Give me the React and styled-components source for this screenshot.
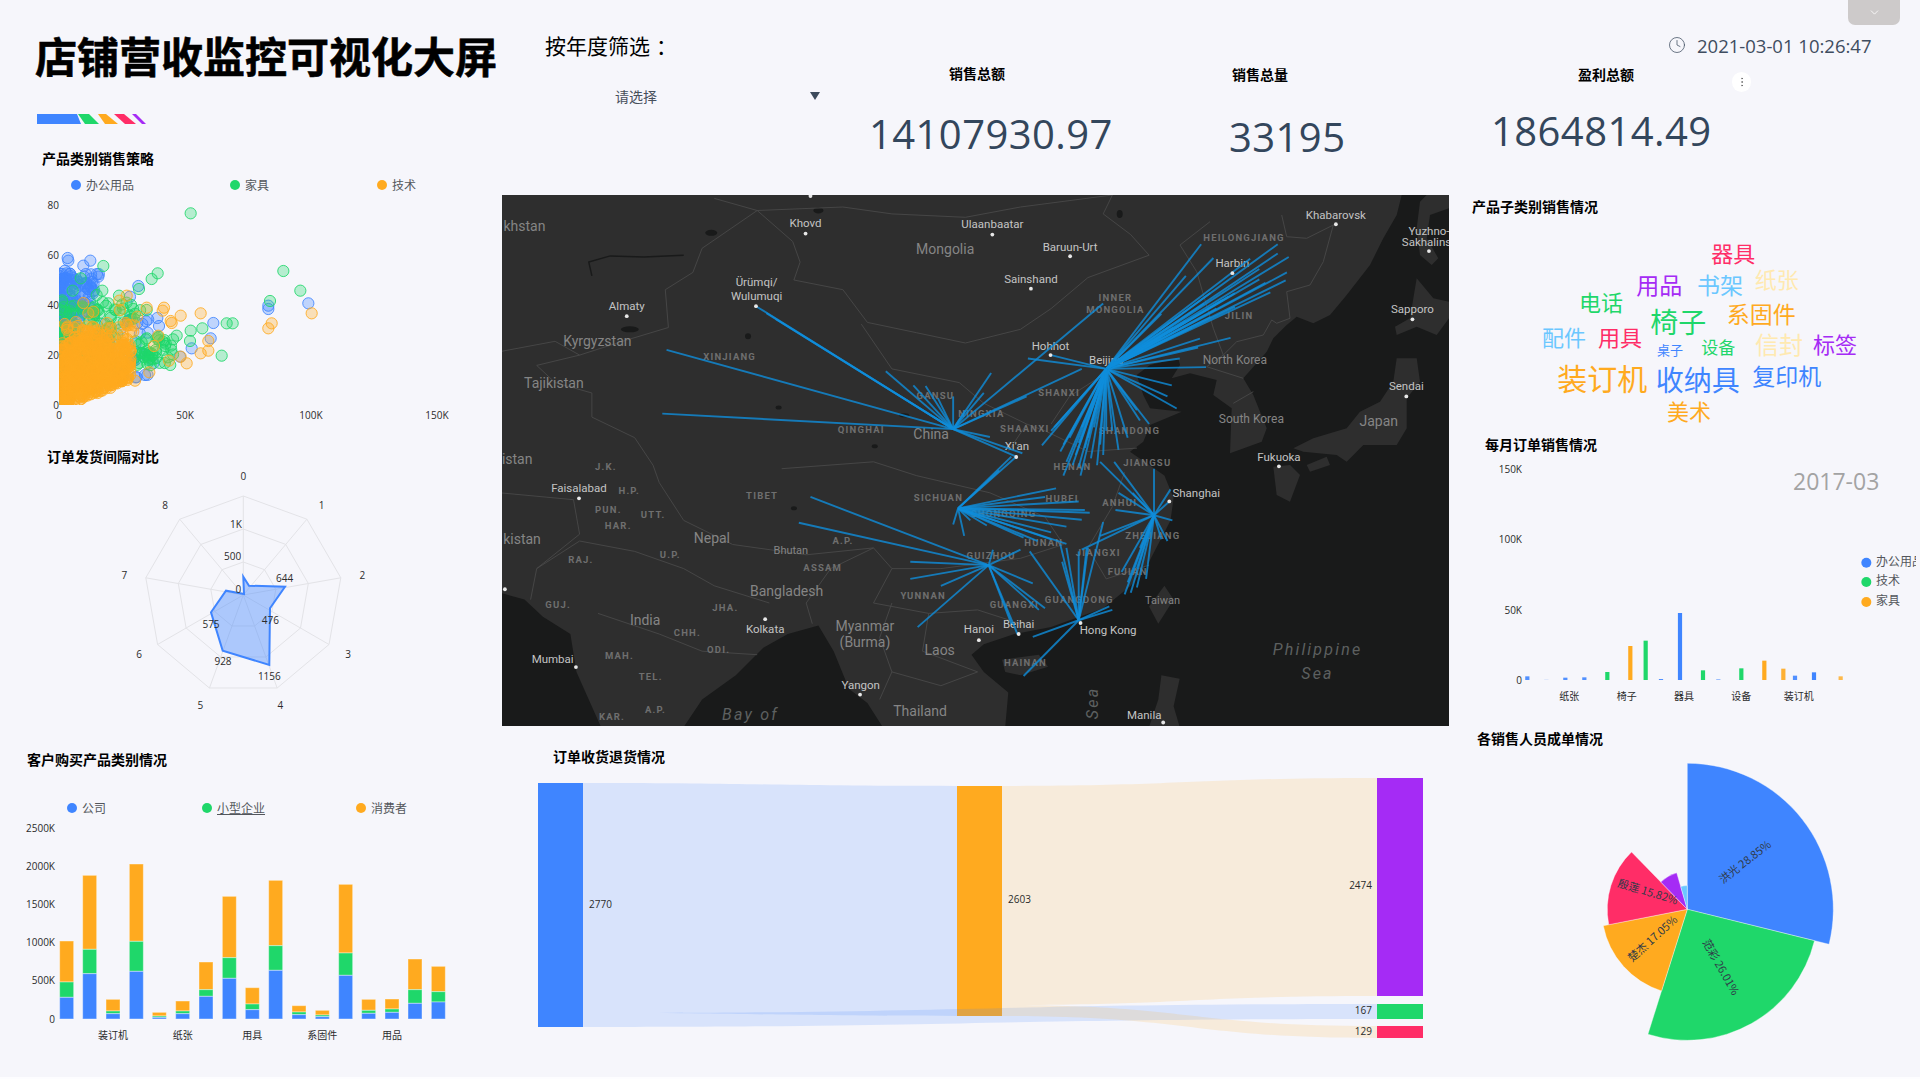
import React from 'react';
import styled, { createGlobalStyle } from 'styled-components';
import { ChevronDown, Clock, EllipsisVertical } from 'lucide-react';

const BLUE = '#3f85ff';
const GREEN = '#1fd76a';
const ORANGE = '#ffaa1f';
const RED = '#ff2d67';
const PURPLE = '#a52bf5';
const SKY = '#6bc7ff';
const CREAM = '#ffe9b0';
const CJK = '"Noto Sans CJK SC", "Noto Sans", sans-serif';
const NUM = '"Open Sans", "Noto Sans CJK SC", sans-serif';

const GlobalStyle = createGlobalStyle`
  html, body { margin: 0; padding: 0; background: #f6f6fb; overflow: hidden; }
  body { font-family: ${CJK}; }
`;

const Page = styled.div`
  position: relative;
  display: flex;
  width: 1920px;
  height: 1079px;
  overflow: hidden;
  background: #f6f6fb;
  box-sizing: border-box;
  border-bottom: 2px solid #fdfdff;
`;
const LeftCol = styled.div`
  width: 502px;
  flex: none;
`;
const Main = styled.div`
  width: 1418px;
  flex: none;
`;
const Head = styled.div`
  height: 149px;
  padding-left: 35px;
  box-sizing: border-box;
`;
const Title = styled.h1`
  margin: 0;
  padding-top: 25px;
  font-size: 42px;
  line-height: 60px;
  font-weight: 700;
  -webkit-text-stroke: 0.6px #000;
  color: #000;
  white-space: nowrap;
`;
const Stripe = styled.svg`
  display: block;
  margin: 29px 0 0 2px;
`;
const Panel = styled.section`
  height: ${p => p.$h}px;
  overflow: hidden;
`;
const PanelTitle = styled.h3`
  margin: 0;
  padding: ${p => p.$top || 0}px 0 2px ${p => p.$x}px;
  font-size: 14px;
  line-height: 18px;
  font-weight: 700;
  color: #000;
`;
const Legend = styled.div`
  display: flex;
  margin-top: ${p => p.$top}px;
  padding: 0 0 2px ${p => p.$x}px;
  height: 15px;
  align-items: center;
`;
const LegendItem = styled.div`
  display: flex;
  align-items: center;
  width: ${p => p.$w}px;
  font-size: 12px;
  color: #53565c;
  span { text-decoration: ${p => (p.$under ? 'underline' : 'none')}; }
`;
const Dot = styled.i`
  width: 10px;
  height: 10px;
  margin-right: 5px;
  border-radius: 50%;
  background: ${p => p.$c};
`;
const Plot = styled.svg`
  display: block;
  margin-top: ${p => p.$mt || 0}px;
`;
const AxisText = styled.text.attrs({ dy: 1 })`
  font-family: ${p => (p.$cjk ? CJK : NUM)};
  font-size: 10px;
  fill: #2b2b2b;
  text-anchor: ${p => p.$a || 'middle'};
  dominant-baseline: middle;
`;
const TopBar = styled.div`
  display: flex;
  height: 195px;
`;
const Filter = styled.div`
  width: 367px;
  flex: none;
  padding: 31px 0 0 43px;
  box-sizing: border-box;
`;
const FilterLabel = styled.div`
  font-size: 21px;
  line-height: 28px;
  color: #000;
`;
const Colon = styled.span`
  padding-left: 6px;
`;
const Select = styled.div`
  display: flex;
  justify-content: space-between;
  align-items: center;
  width: 280px;
  height: 20px;
  margin-top: 27px;
  padding: 0 5px 0 70px;
  box-sizing: border-box;
  font-size: 14px;
  color: #47505c;
`;
const Caret = styled.i`
  width: 0;
  height: 0;
  border-left: 5px solid transparent;
  border-right: 5px solid transparent;
  border-top: 8px solid #3c4a5c;
`;
const Kpi = styled.div`
  width: ${p => p.$w}px;
  flex: none;
  padding-top: ${p => p.$top}px;
  box-sizing: border-box;
`;
const KpiLabel = styled.div`
  margin: 0 0 ${p => p.$gap}px ${p => p.$x}px;
  font-size: 14px;
  line-height: 20px;
  font-weight: 700;
  color: #000;
`;
const KpiValue = styled.div`
  font-family: ${NUM};
  font-size: 40px;
  line-height: 56px;
  letter-spacing: 0.42px;
  color: #33465c;
  white-space: nowrap;
`;
const ClockBox = styled.div`
  display: flex;
  align-items: center;
  height: 22px;
  margin-top: 34px;
  gap: 11px;
  font-family: ${NUM};
  font-size: 18.5px;
  color: #3f4d60;
  white-space: nowrap;
`;
const MenuDots = styled.div`
  position: absolute;
  left: 1732px;
  top: 72px;
  display: flex;
  align-items: center;
  justify-content: center;
  width: 19px;
  height: 20px;
  border-radius: 10px;
  background: #fff;
  color: #666;
`;
const Handle = styled.div`
  position: absolute;
  left: 1848px;
  top: 0;
  display: flex;
  align-items: center;
  justify-content: center;
  width: 52px;
  height: 25px;
  border-radius: 0 0 7px 7px;
  background: #cdcaca;
  color: #fff;
`;
const Body = styled.div`
  display: flex;
`;
const CenterCol = styled.div`
  width: 947px;
  flex: none;
`;
const RightCol = styled.div`
  width: 471px;
  flex: none;
`;
const MapFrame = styled.svg`
  display: block;
  background: #191a1a;
`;
const CityLabel = styled.text`
  font-family: Roboto, "Open Sans", sans-serif;
  font-size: 11.5px;
  fill: #c4c4c4;
  text-anchor: middle;
  dominant-baseline: middle;
`;
const CountryLabel = styled.text`
  font-family: Roboto, "Open Sans", sans-serif;
  font-size: ${p => p.$s || 14}px;
  fill: #858585;
  text-anchor: middle;
  dominant-baseline: middle;
`;
const ProvinceLabel = styled.text`
  font-family: Roboto, "Open Sans", sans-serif;
  font-size: 9.5px;
  font-weight: 700;
  letter-spacing: 1.2px;
  fill: #6f6f6f;
  text-anchor: middle;
  dominant-baseline: middle;
`;
const SeaLabel = styled.text`
  font-family: Roboto, "Open Sans", sans-serif;
  font-size: 16px;
  font-style: italic;
  letter-spacing: 2.2px;
  fill: #5d6060;
  text-anchor: middle;
  dominant-baseline: middle;
`;
const Word = styled.text`
  font-family: ${CJK};
  font-size: ${p => p.$s}px;
  fill: ${p => p.$c};
  text-anchor: middle;
  dominant-baseline: central;
`;
const LegendText = styled.text`
  font-family: ${CJK};
  font-size: 12px;
  fill: #53565c;
  dominant-baseline: middle;
`;
const TimelineText = styled.text`
  font-family: ${NUM};
  font-size: 23px;
  fill: #a3a3a3;
  dominant-baseline: middle;
`;
const SliceLabel = styled.text`
  font-family: ${CJK};
  font-size: 11px;
  fill: #2f3a48;
  text-anchor: middle;
  dominant-baseline: middle;
`;

// seeded random so the scatter is the same on every load
let seed = 20210301;
const rnd = () => {
  seed = (seed + 0x6d2b79f5) | 0;
  let t = Math.imul(seed ^ (seed >>> 15), 1 | seed);
  t = (t + Math.imul(t ^ (t >>> 7), 61 | t)) ^ t;
  return ((t ^ (t >>> 14)) >>> 0) / 4294967296;
};

const bluePts = [[143, 354], [145, 362], [190, 377], [211, 362], [192, 430], [355, 438], [330, 470], [745, 497], [745, 507], [865, 490], [580, 549], [352, 549], [412, 534], [417, 558], [383, 578], [572, 595], [515, 625], [480, 650], [400, 670], [375, 705], [140, 400], [135, 392]];
const greenPts = [[512, 220], [250, 378], [182, 415], [395, 417], [413, 400], [158, 452], [247, 452], [790, 393], [841, 452], [750, 483], [357, 447], [297, 467], [620, 550], [638, 550], [512, 572], [547, 565], [605, 647], [470, 587], [510, 603], [380, 510], [265, 490], [230, 465]];
const orangePts = [[190, 489], [320, 467], [298, 482], [380, 503], [432, 503], [428, 512], [452, 543], [455, 549], [482, 527], [542, 520], [875, 520], [755, 550], [745, 565], [565, 603], [565, 632], [542, 640], [500, 670], [447, 662], [482, 650], [415, 587], [402, 618], [388, 697], [345, 722], [340, 575], [352, 530], [300, 510], [220, 515], [205, 520]];

for (let i = 0; i < 300; i++) {
  const y = 800 - Math.pow(rnd(), 0.75) * 400;
  bluePts.push([118 + Math.pow(rnd(), 2.2) * (800 - y) * 0.3, y]);
}
for (let i = 0; i < 45; i++) bluePts.push([200 + rnd() * 200, 520 + rnd() * 200]);
for (let i = 0; i < 260; i++) {
  const y = 800 - Math.pow(rnd(), 1.15) * 320;
  greenPts.push([118 + Math.pow(rnd(), 1.25) * (800 - y) * 0.85, y]);
}
for (let i = 0; i < 45; i++) greenPts.push([340 + rnd() * 120, 590 + rnd() * 90]);
for (let i = 0; i < 520; i++) {
  const x = 118 + Math.pow(rnd(), 1.3) * 215;
  const top = 600 - Math.sin(((x - 118) / 215) * 3.1) * 30;
  const bottom = 808 - (x - 118) * 0.42;
  orangePts.push([x, top + Math.pow(rnd(), 0.8) * (bottom - top)]);
}
for (let i = 0; i < 40; i++) orangePts.push([130 + rnd() * 215, 545 + rnd() * 70]);

const stacks = [
  [772, 726, 603], [701, 628, 406], [821, 813, 778], [694, 604, 372], [832, 828, 817], [821, 813, 783],
  [769, 749, 666], [715, 653, 469], [809, 792, 743], [691, 617, 421], [824, 816, 797], [830, 825, 811],
  [706, 639, 433], [820, 811, 778], [817, 807, 777], [790, 749, 657], [786, 755, 679],
];
const stackX = [140, 209, 279, 349, 418, 488, 558, 628, 697, 767, 837, 907, 977, 1046, 1116, 1185, 1255];

const monthBars = [
  [202, 739, BLUE, 0.9], [259, 747, BLUE, 0.12], [316, 743, BLUE, 0.9], [373, 742, BLUE, 0.9], [442, 726, GREEN, 1],
  [511, 648, ORANGE, 1], [557, 632, GREEN, 1], [603, 747, BLUE, 0.9], [660, 549, BLUE, 1], [729, 721, GREEN, 1],
  [775, 747, BLUE, 0.5], [844, 715, GREEN, 1], [913, 692, ORANGE, 1], [970, 716, ORANGE, 0.9], [1005, 737, BLUE, 0.9],
  [1062, 727, BLUE, 1], [1142, 739, ORANGE, 0.8],
];

const words = [
  ['器具', 820, 192, 22, RED], ['用品', 598, 288, 23, PURPLE], ['书架', 780, 287, 23, SKY], ['纸张', 950, 270, 22, CREAM],
  ['电话', 423, 340, 22, GREEN], ['椅子', 655, 398, 28, GREEN], ['系固件', 904, 375, 23, ORANGE], ['配件', 312, 445, 22, SKY],
  ['用具', 480, 445, 22, RED], ['桌子', 630, 483, 13, BLUE], ['设备', 775, 475, 17, GREEN], ['信封', 957, 466, 24, CREAM],
  ['标签', 1125, 466, 22, PURPLE], ['装订机', 427, 568, 30, ORANGE], ['收纳具', 713, 573, 28, BLUE], ['复印机', 980, 562, 23, BLUE],
  ['美术', 687, 665, 22, ORANGE],
];

// z(): coordinates read off the whole-map crop, q(): off the north-east crop
const z = ([x, y]) => [x / 1.633 - 2, y / 2.904 - 5.2];
const q = ([x, y]) => [628 + x / 3, y / 3];
const toPts = list => list.map(p => p.map(n => n.toFixed(1)).join(',')).join(' ');

const seaEast = toPts([
  ...[[815, 0], [800, 60], [760, 130], [720, 210], [650, 300], [600, 360], [550, 385], [500, 365], [470, 390], [430, 430], [410, 470], [340, 550], [370, 600], [410, 700], [395, 740], [300, 775], [305, 640], [250, 600], [260, 555], [180, 535], [125, 550], [150, 510], [145, 490], [60, 510], [20, 540], [40, 600], [60, 640], [155, 650], [60, 690], [40, 740], [0, 770]].map(q),
  ...[[1085, 830], [1100, 895], [1095, 960], [1060, 1080], [1030, 1150], [985, 1215], [900, 1270], [840, 1290], [790, 1320], [770, 1350], [790, 1400], [830, 1460], [825, 1560]].map(z),
  [947, 531], [947, 0],
]);
const seaArabian = toPts([[0, 1170], [40, 1190], [70, 1240], [115, 1290], [125, 1400], [165, 1560], [0, 1560]].map(z));
const seaBengal = toPts([[300, 1560], [330, 1480], [385, 1410], [430, 1330], [470, 1290], [520, 1265], [545, 1340], [570, 1450], [600, 1490], [625, 1560]].map(z));
const islands = [
  [[870, 20], [890, 0], [957, 0], [957, 40], [900, 60], [890, 130], [925, 190], [905, 210], [870, 180], [860, 100]].map(q),
  [[860, 250], [910, 310], [957, 320], [957, 370], [920, 420], [860, 395], [800, 420], [795, 395], [840, 370]].map(q),
  [[800, 490], [860, 490], [870, 560], [830, 610], [830, 700], [800, 750], [700, 750], [650, 800], [620, 780], [520, 770], [490, 760], [550, 730], [650, 700], [690, 650], [750, 620], [790, 560]].map(q),
  [[430, 815], [480, 810], [510, 840], [480, 920], [440, 900]].map(q),
  [[530, 810], [590, 785], [600, 810], [540, 830]].map(q),
  [[1085, 1150], [1100, 1190], [1075, 1260], [1060, 1210]].map(z),
  [[820, 1365], [880, 1350], [895, 1385], [850, 1410], [825, 1400]].map(z),
  [[1080, 1410], [1110, 1420], [1100, 1500], [1110, 1560], [1060, 1560], [1075, 1480]].map(z),
];
const borders = [
  [[420, 60], [478, 150], [490, 210], [480, 262], [560, 290], [600, 385], [680, 415], [760, 445], [850, 405], [900, 345], [960, 255], [1060, 190], [1030, 130], [985, 70], [1000, 15]],
  [[1000, 15], [850, 50], [760, 80], [640, 70], [560, 50], [420, 60], [350, 25]],
  [[420, 60], [330, 170], [315, 240], [270, 290], [275, 400], [200, 440], [130, 480], [90, 440], [0, 470]],
  [[130, 480], [60, 510], [90, 560], [150, 590], [150, 660], [220, 720], [250, 800], [260, 850], [300, 960], [380, 1030], [500, 1060], [610, 1040], [640, 1100], [610, 1200], [700, 1230], [780, 1220], [850, 1260]],
  [[590, 390], [640, 520], [750, 560], [790, 620], [860, 680], [830, 760]],
  [[460, 810], [610, 790], [680, 830], [800, 880], [890, 950], [920, 1030], [850, 1070], [720, 1100], [640, 1100]],
  [[860, 680], [890, 700], [960, 760], [1040, 750]],
  [[1000, 520], [930, 600], [900, 680]],
  [[1020, 820], [1000, 920], [960, 1040], [990, 1130], [1060, 1090]],
  [[60, 1100], [130, 1020], [220, 1050], [300, 1100], [350, 1150], [440, 1200]],
  [[0, 880], [120, 900], [130, 1000], [60, 1100], [50, 1190]],
  [[160, 1230], [260, 1290], [330, 1340], [420, 1350]],
  [[610, 1040], [540, 1100], [500, 1200], [510, 1260]],
  [[640, 1200], [620, 1300], [640, 1400], [620, 1480]],
  [[700, 1230], [690, 1340], [780, 1400], [720, 1440], [640, 1400]],
].map(b => b.map(z));
const bordersNE = [
  [[240, 80], [150, 150], [200, 230], [250, 400], [280, 480], [230, 515]],
  [[470, 125], [530, 130], [610, 90], [580, 200], [540, 270], [470, 290], [480, 370], [440, 385], [425, 375], [400, 420], [320, 440], [280, 480]],
  [[455, 60], [470, 125]],
  [[230, 515], [340, 550]],
  [[310, 625], [370, 590]],
].map(b => b.map(q));

const hubs = [
  [[990, 520], [[1145, 158], [1165, 198], [1120, 250], [1270, 158], [1270, 185], [1288, 195], [1285, 240], [1283, 263], [1258, 298], [1200, 340], [1180, 320], [1240, 230], [1225, 200], [1150, 330], [1193, 430], [1143, 432], [1140, 458], [1110, 490], [1153, 515], [1097, 568], [1105, 635], [1090, 600], [862, 490], [900, 480], [885, 742], [905, 690], [915, 760], [920, 830], [935, 800], [948, 830], [965, 780], [945, 805], [1010, 755], [1000, 700], [1045, 670], [1060, 680], [1040, 640], [975, 800], [955, 750], [990, 700], [985, 770], [930, 720], [950, 690], [1025, 720], [1240, 260], [1200, 300], [1160, 370], [1130, 400], [1080, 430], [1100, 400], [1190, 310], [1160, 300], [1250, 270], [1120, 380], [1170, 345], [1080, 360], [940, 770], [925, 790], [960, 720], [970, 690], [920, 740], [900, 700], [945, 735], [980, 740]]],
  [[740, 695], [[418, 338], [435, 358], [450, 375], [272, 465], [265, 650], [630, 527], [675, 568], [695, 570], [715, 605], [740, 600], [802, 532], [790, 590], [760, 640], [985, 330], [860, 600], [950, 520], [800, 718], [853, 765], [843, 775]]],
  [[748, 925], [[843, 775], [835, 775], [815, 815], [908, 867], [945, 905], [955, 930], [963, 938], [950, 958], [925, 978], [900, 995], [925, 1028], [878, 1020], [740, 972], [758, 1005], [768, 960], [795, 975], [890, 892], [900, 1015], [855, 1010]]],
  [[798, 1090], [[507, 892], [488, 967], [670, 1080], [670, 1130], [720, 1150], [682, 1270], [850, 1045], [805, 1045], [870, 1143], [890, 1215], [880, 1220], [845, 1290], [835, 1260]]],
  [[945, 1250], [[865, 1050], [915, 1030], [925, 1040], [945, 1050], [960, 1040], [985, 965], [870, 1298], [855, 1412], [995, 1210], [1000, 1220], [958, 1040], [918, 1080]]],
  [[1068, 945], [[980, 790], [1003, 790], [1010, 880], [1068, 810], [1033, 880], [1005, 930], [1095, 870], [1093, 905], [1098, 960], [950, 1045], [980, 1005], [1020, 1175], [1030, 1170], [1040, 1155], [1055, 1130], [1015, 1110], [1090, 1020], [1080, 1015], [1045, 1040], [1040, 1100], [1025, 1140]]],
];

const cities = [
  ['Khovd', 499, 100, 499, 127], ['Ulaanbaatar', 804, 102, 804, 130], ['Baruun-Urt', 931, 170, 931, 193], ['Khabarovsk', 1365, 75, 1365, 100],
  ['Yuzhno-', 1517, 123, 1517, 178], ['Sakhalins', 1513, 155], ['Sainshand', 867, 262, 867, 287], ['Harbin', 1196, 214, 1196, 242],
  ['Ürümqi/', 419, 272, 418, 338], ['Wulumuqi', 419, 312], ['Almaty', 207, 340, 207, 367], ['Hohhot', 899, 455, 899, 480],
  ['Beijing', 990, 496], ['Sapporo', 1490, 350, 1490, 376], ['Sendai', 1480, 574, 1480, 600], ['Fukuoka', 1272, 778, 1272, 803],
  ["Xi'an", 844, 748, 843, 776], ['Shanghai', 1137, 884, 1093, 905], ['Faisalabad', 129, 868, 129, 896], ['Kolkata', 433, 1277, 433, 1247],
  ['Mumbai', 86, 1365, 124, 1386], ['Hanoi', 782, 1278, 782, 1308], ['Beihai', 847, 1263, 847, 1290], ['Hong Kong', 993, 1280, 948, 1258],
  ['Yangon', 589, 1440, 588, 1466], ['Manila', 1052, 1527, 1083, 1547],
];
const countries = [
  ['Mongolia', 727, 177, 14], ['khstan', 40, 108, 14], ['Kyrgyzstan', 159, 443, 14], ['Tajikistan', 88, 565, 14], ['China', 704, 713, 14],
  ['istan', 28, 785, 14], ['kistan', 36, 1018, 14], ['Nepal', 346, 1015, 14], ['Bhutan', 475, 1050, 11], ['Bangladesh', 468, 1170, 14],
  ['India', 237, 1252, 14], ['Myanmar', 596, 1270, 14], ['(Burma)', 596, 1316, 14], ['Laos', 718, 1340, 14], ['Thailand', 686, 1517, 14],
  ['North Korea', 1200, 496, 12], ['South Korea', 1227, 668, 12], ['Japan', 1435, 675, 14], ['Taiwan', 1082, 1193, 11],
];
const provinces = [
  ['HEILONGJIANG', 1215, 140], ['INNER', 1005, 315], ['MONGOLIA', 1005, 350], ['JILIN', 1207, 367], ['XINJIANG', 375, 487], ['GANSU', 711, 600],
  ['NINGXIA', 786, 652], ['SHANXI', 913, 592], ['SHAANXI', 857, 697], ['SHANDONG', 1028, 702], ['QINGHAI', 590, 700], ['HENAN', 935, 807],
  ['JIANGSU', 1057, 795], ['TIBET', 428, 890], ['SICHUAN', 716, 895], ['HUBEI', 918, 898], ['ANHUI', 1012, 910], ['CHONGQING', 822, 944],
  ['ZHEJIANG', 1066, 1006], ['HUNAN', 888, 1027], ['A.P.', 560, 1021], ['GUIZHOU', 802, 1066], ['JIANGXI', 977, 1055], ['FUJIAN', 1025, 1110],
  ['ASSAM', 527, 1100], ['YUNNAN', 691, 1180], ['GUANGXI', 840, 1207], ['GUANGDONG', 946, 1192], ['HAINAN', 858, 1376], ['J.K.', 173, 806],
  ['H.P.', 211, 875], ['PUN.', 177, 930], ['UTT.', 250, 945], ['HAR.', 193, 977], ['RAJ.', 132, 1077], ['U.P.', 278, 1062], ['GUJ.', 95, 1208],
  ['JHA.', 368, 1217], ['CHH.', 306, 1288], ['MAH.', 195, 1355], ['ODI.', 357, 1337], ['TEL.', 246, 1415], ['KAR.', 183, 1532], ['A.P.', 254, 1512],
];
const lakes = [[345, 125, 6, 3], [212, 405, 9, 3], [405, 425, 3, 3], [455, 632, 3, 2], [520, 60, 5, 3], [1012, 70, 3, 4], [660, 655, 5, 2], [480, 925, 3, 2], [612, 745, 3, 2]];

const StoreMap = () => (
  <MapFrame width="947" height="531" viewBox="0 0 947 531">
    <rect width="947" height="531" fill="#2e2e2e" />
    <polygon points={seaEast} fill="#191a1a" />
    <polygon points={seaArabian} fill="#191a1a" />
    <polygon points={seaBengal} fill="#191a1a" />
    {islands.map((pts, i) => <polygon key={i} points={toPts(pts)} fill="#2e2e2e" />)}
    <polyline points={toPts([[150, 250], [145, 210], [180, 192], [235, 195], [300, 190]].map(z))} fill="none" stroke="#191a1a" strokeWidth="1.5" />
    {lakes.map(([x, y, rx, ry], i) => {
      const [cx, cy] = z([x, y]);
      return <ellipse key={i} cx={cx} cy={cy} rx={rx} ry={ry} fill="#191a1a" />;
    })}
    {[...borders, ...bordersNE].map((b, i) => (
      <polyline key={i} points={toPts(b)} fill="none" stroke="#484848" strokeWidth="0.9" />
    ))}
    {provinces.map(([t, x, y], i) => {
      const [px, py] = z([x, y]);
      return <ProvinceLabel key={i} x={px} y={py}>{t}</ProvinceLabel>;
    })}
    {countries.map(([t, x, y, s]) => {
      const [px, py] = z([x, y]);
      return <CountryLabel key={t} x={px} y={py} $s={s}>{t}</CountryLabel>;
    })}
    {cities.map(([t, x, y]) => {
      const [px, py] = z([x, y]);
      return <CityLabel key={t} x={px} y={py}>{t}</CityLabel>;
    })}
    {hubs.map(([hub, ends], i) => {
      const [hx, hy] = z(hub);
      return ends.map((e, j) => {
        const [ex, ey] = z(e);
        return <line key={`${i}-${j}`} x1={hx} y1={hy} x2={ex} y2={ey} stroke="#0f8ddb" strokeWidth="1.9" strokeOpacity="0.8" />;
      });
    })}
    {cities.filter(c => c[3] !== undefined).map(c => {
      const [dx, dy] = z([c[3], c[4]]);
      return <circle key={c[0]} cx={dx} cy={dy} r="1.9" fill="#e8e8e8" />;
    })}
    <circle cx={z([507, 18])[0]} cy={z([507, 18])[1]} r="1.9" fill="#e8e8e8" />
    <circle cx={z([8, 1160])[0]} cy={z([8, 1160])[1]} r="1.9" fill="#e8e8e8" />
    <SeaLabel x={z([1335, 1340])[0]} y={z([1335, 1340])[1]}>Philippine</SeaLabel>
    <SeaLabel x={z([1335, 1408])[0]} y={z([1335, 1408])[1]}>Sea</SeaLabel>
    <SeaLabel x={z([409, 1528])[0]} y={z([409, 1528])[1]}>Bay of</SeaLabel>
    <SeaLabel transform={`translate(${z([970, 1490])[0]} ${z([970, 1490])[1]}) rotate(-90)`}>Sea</SeaLabel>
  </MapFrame>
);

const ScatterChart = () => {
  const series = [[bluePts, BLUE], [greenPts, GREEN], [orangePts, ORANGE]];
  return (
    <Plot width="502" height="236" viewBox="0 194 502 236">
      <defs>
        <clipPath id="scatterClip"><rect x="59" y="194" width="443" height="211" /></clipPath>
      </defs>
      <g clipPath="url(#scatterClip)">
        {series.map(([pts, c]) =>
          pts.map(([x, y], i) => (
            <circle key={`${c}${i}`} cx={20 + x / 3} cy={140 + y / 3} r="5.6" fill={c} fillOpacity="0.3" stroke={c} strokeOpacity="0.85" />
          ))
        )}
      </g>
      {[0, 20, 40, 60, 80].map((v, i) => (
        <AxisText key={v} x="59" y={405 - i * 50} $a="end">{v}</AxisText>
      ))}
      {[['0', 59], ['50K', 185], ['100K', 311], ['150K', 437]].map(([t, x]) => (
        <AxisText key={t} x={x} y="415">{t}</AxisText>
      ))}
    </Plot>
  );
};

const RX = 243.3;
const RY = 595;
const ring = r =>
  Array.from({ length: 9 }, (_, i) => {
    const a = (i * 40 * Math.PI) / 180;
    return [RX + r * Math.sin(a), RY - r * Math.cos(a)];
  });

const RadarChart = () => {
  const zr = ([x, y]) => [100 + x / 3, 440 + y / 3];
  const shape = [[430, 410], [447, 437], [555, 440], [510, 505], [508, 675], [368, 632], [333, 517], [378, 452], [432, 462]].map(zr);
  const valueLabels = [['644', 554, 414], ['476', 511, 540], ['1156', 508, 708], ['928', 369, 665], ['575', 333, 552], ['1K', 408, 252], ['500', 398, 348], ['0', 415, 447]];
  const axisLabels = [[430, 110], [665, 195], [787, 405], [744, 642], [541, 795], [301, 795], [117, 642], [73, 405], [195, 195]];
  return (
    <Plot width="502" height="278" viewBox="0 467 502 278">
      {[33, 66, 99].map(r => (
        <polygon key={r} points={toPts(ring(r))} fill="none" stroke="#e3e3e7" strokeWidth="1" />
      ))}
      {ring(99).map(([x, y], i) => <line key={i} x1={RX} y1={RY} x2={x} y2={y} stroke="#e3e3e7" />)}
      <polygon points={toPts(shape)} fill={BLUE} fillOpacity="0.4" stroke={BLUE} strokeWidth="2" />
      {axisLabels.map((p, i) => {
        const [x, y] = zr(p);
        return <AxisText key={i} x={x} y={y}>{i}</AxisText>;
      })}
      {valueLabels.map(([t, x, y]) => {
        const [px, py] = zr([x, y]);
        return <AxisText key={t} x={px} y={py}>{t}</AxisText>;
      })}
    </Plot>
  );
};

const StackedBars = () => {
  const X = x => 20 + x / 3;
  const Y = y => 740 + y / 3;
  return (
    <Plot width="502" height="262" viewBox="0 817 502 262">
      {[['2500K', 828], ['2000K', 866], ['1500K', 904], ['1000K', 942.7], ['500K', 980.7], ['0', 1019]].map(([t, y]) => (
        <AxisText key={t} x="55" y={y} $a="end">{t}</AxisText>
      ))}
      {stacks.map(([b, g, o], i) => {
        const x = X(stackX[i]) - 7;
        return (
          <g key={i} strokeOpacity="0.4" strokeWidth="1">
            <rect x={x} y={Y(o)} width="14" height={Y(g) - Y(o)} fill={ORANGE} stroke="#fff" />
            <rect x={x} y={Y(g)} width="14" height={Y(b) - Y(g)} fill={GREEN} stroke="#fff" />
            <rect x={x} y={Y(b)} width="14" height={1019 - Y(b)} fill={BLUE} stroke="#fff" />
          </g>
        );
      })}
      {[['装订机', 279], ['纸张', 488], ['用具', 697], ['系固件', 907], ['用品', 1116]].map(([t, x]) => (
        <AxisText key={t} x={X(x)} y="1035.5" $cjk>{t}</AxisText>
      ))}
    </Plot>
  );
};

const Sankey = () => {
  const band = (x1, a1, b1, x2, a2, b2) => {
    const m = (x1 + x2) / 2;
    return `M${x1} ${a1}C${m} ${a1} ${m} ${a2} ${x2} ${a2}L${x2} ${b2}C${m} ${b2} ${m} ${b1} ${x1} ${b1}Z`;
  };
  return (
    <Plot $mt={3} width="947" height="309" viewBox="502 770 947 309">
      <rect x="538" y="783" width="45" height="244" fill={BLUE} />
      <rect x="957" y="786" width="45" height="230" fill={ORANGE} />
      <rect x="1377" y="778" width="46" height="218" fill={PURPLE} />
      <rect x="1377" y="1004" width="46" height="15" fill={GREEN} />
      <rect x="1377" y="1026" width="46" height="12" fill={RED} />
      <path d={band(583, 783, 1013, 957, 786, 1016)} fill={BLUE} fillOpacity="0.16" />
      <path d={band(583, 1013, 1027, 1377, 1004, 1019)} fill={BLUE} fillOpacity="0.16" />
      <path d={band(1002, 786, 1005, 1377, 778, 996)} fill={ORANGE} fillOpacity="0.14" />
      <path d={band(1002, 1005, 1016, 1377, 1026, 1038)} fill={ORANGE} fillOpacity="0.14" />
      <AxisText x="589" y="904" $a="start">2770</AxisText>
      <AxisText x="1008" y="899" $a="start">2603</AxisText>
      <AxisText x="1372" y="885" $a="end">2474</AxisText>
      <AxisText x="1372" y="1010" $a="end">167</AxisText>
      <AxisText x="1372" y="1031" $a="end">129</AxisText>
    </Plot>
  );
};

const WordCloud = () => (
  <Plot width="471" height="215" viewBox="1449 217 471 215">
    {words.map(([t, x, y, s, c]) => (
      <Word key={t} x={1460 + x / 3} y={188 + y / 3} $s={s} $c={c}>{t}</Word>
    ))}
  </Plot>
);

const MonthlyChart = () => {
  const X = x => 1460 + x / 3;
  const Y = y => 430 + y / 3;
  return (
    <Plot width="471" height="270" viewBox="1449 455 471 270">
      <defs>
        <clipPath id="monthClip"><rect x="1449" y="455" width="467" height="270" /></clipPath>
      </defs>
      {[['150K', 469], ['100K', 539], ['50K', 610], ['0', 680]].map(([t, y]) => (
        <AxisText key={t} x="1522" y={y} $a="end">{t}</AxisText>
      ))}
      {monthBars.map(([x, top, c, o], i) => (
        <rect key={i} x={X(x) - 2.1} y={Y(top)} width="4.2" height={680 - Y(top)} fill={c} fillOpacity={o} />
      ))}
      {[['纸张', 328], ['椅子', 500], ['器具', 672], ['设备', 844], ['装订机', 1016]].map(([t, x]) => (
        <AxisText key={t} x={X(x)} y="696.5" $cjk>{t}</AxisText>
      ))}
      <TimelineText x="1793" y="484">2017-03</TimelineText>
      <g clipPath="url(#monthClip)">
        {[['办公用品', BLUE, 395], ['技术', GREEN, 453], ['家具', ORANGE, 513]].map(([t, c, y]) => (
          <g key={t}>
            <circle cx={X(1219)} cy={Y(y) + 1} r="5" fill={c} />
            <LegendText x={X(1248)} y={Y(y) + 1}>{t}</LegendText>
          </g>
        ))}
      </g>
    </Plot>
  );
};

const RoseChart = () => {
  const cx = 1687.3;
  const cy = 909.3;
  const pt = (deg, r) => {
    const a = (deg * Math.PI) / 180;
    return [cx + r * Math.sin(a), cy - r * Math.cos(a)];
  };
  const slices = [
    [0, 103.86, 146, BLUE], [103.86, 197.5, 131, GREEN], [197.5, 258.9, 85.6, ORANGE],
    [258.9, 315.8, 80, RED], [315.8, 343.8, 38, PURPLE], [343.8, 360, 23.7, SKY],
  ];
  const labels = [
    ['洪光 28.85%', 857, 428, -38], ['范彩 26.01%', 780, 743, 60.7],
    ['楚杰 17.05%', 580, 658, -42], ['殷莲 15.82%', 563, 518, 17],
  ];
  return (
    <Plot width="471" height="330" viewBox="1449 749 471 330">
      {slices.map(([a, b, r, c]) => {
        const [x1, y1] = pt(a, r);
        const [x2, y2] = pt(b, r);
        const large = b - a > 180 ? 1 : 0;
        return (
          <path key={c} d={`M${cx} ${cy}L${x1} ${y1}A${r} ${r} 0 ${large} 1 ${x2} ${y2}Z`} fill={c} stroke="#fff" strokeWidth="0.6" strokeOpacity="0.6" />
        );
      })}
      {labels.map(([t, x, y, rot]) => (
        <SliceLabel key={t} transform={`translate(${1460 + x / 3} ${720 + y / 3}) rotate(${rot})`}>{t}</SliceLabel>
      ))}
    </Plot>
  );
};

const App = () => {
  return (
    <Page>
      <GlobalStyle />
      <LeftCol>
        <Head>
          <Title>店铺营收监控可视化大屏</Title>
          <Stripe width="110" height="10" viewBox="0 0 110 10">
            <polygon points="0,0 40,0 44,10 0,10" fill={BLUE} />
            <polygon points="41,0 52,0 62,10 48,10" fill={GREEN} />
            <polygon points="61,0 69,0 81,10 68,10" fill={ORANGE} />
            <polygon points="77,0 87,0 99,10 88,10" fill={RED} />
            <polygon points="95,0 99,0 109,10 105,10" fill={PURPLE} />
          </Stripe>
        </Head>
        <Panel $h={298}>
          <PanelTitle $x={42}>产品类别销售策略</PanelTitle>
          <Legend $top={8} $x={71}>
            <LegendItem $w={159}><Dot $c={BLUE} /><span>办公用品</span></LegendItem>
            <LegendItem $w={147}><Dot $c={GREEN} /><span>家具</span></LegendItem>
            <LegendItem $w={100}><Dot $c={ORANGE} /><span>技术</span></LegendItem>
          </Legend>
          <ScatterChart />
        </Panel>
        <Panel $h={303}>
          <PanelTitle $x={47}>订单发货间隔对比</PanelTitle>
          <RadarChart />
        </Panel>
        <Panel $h={329}>
          <PanelTitle $x={27}>客户购买产品类别情况</PanelTitle>
          <Legend $top={30} $x={67}>
            <LegendItem $w={135}><Dot $c={BLUE} /><span>公司</span></LegendItem>
            <LegendItem $w={154} $under><Dot $c={GREEN} /><span>小型企业</span></LegendItem>
            <LegendItem $w={100}><Dot $c={ORANGE} /><span>消费者</span></LegendItem>
          </Legend>
          <StackedBars />
        </Panel>
      </LeftCol>
      <Main>
        <TopBar>
          <Filter>
            <FilterLabel>按年度筛选<Colon>：</Colon></FilterLabel>
            <Select>请选择<Caret /></Select>
          </Filter>
          <Kpi $w={360} $top={63}>
            <KpiLabel $x={80} $gap={23}>销售总额</KpiLabel>
            <KpiValue>14107930.97</KpiValue>
          </Kpi>
          <Kpi $w={262} $top={64}>
            <KpiLabel $x={3} $gap={25}>销售总量</KpiLabel>
            <KpiValue>33195</KpiValue>
          </Kpi>
          <Kpi $w={177} $top={64}>
            <KpiLabel $x={87} $gap={19}>盈利总额</KpiLabel>
            <KpiValue>1864814.49</KpiValue>
          </Kpi>
          <ClockBox>
            <Clock size={18} strokeWidth={1} />
            2021-03-01 10:26:47
          </ClockBox>
        </TopBar>
        <Body>
          <CenterCol>
            <StoreMap />
            <Panel $h={353}>
              <PanelTitle $x={51} $top={21}>订单收货退货情况</PanelTitle>
              <Sankey />
            </Panel>
          </CenterCol>
          <RightCol>
            <Panel $h={240}>
              <PanelTitle $x={23} $top={2}>产品子类别销售情况</PanelTitle>
              <WordCloud />
            </Panel>
            <Panel $h={294}>
              <PanelTitle $x={36}>每月订单销售情况</PanelTitle>
              <MonthlyChart />
            </Panel>
            <Panel $h={350}>
              <PanelTitle $x={28}>各销售人员成单情况</PanelTitle>
              <RoseChart />
            </Panel>
          </RightCol>
        </Body>
      </Main>
      <MenuDots><EllipsisVertical size={12} strokeWidth={1.5} /></MenuDots>
      <Handle><ChevronDown size={13} strokeWidth={1.5} /></Handle>
    </Page>
  );
};

export default App;
